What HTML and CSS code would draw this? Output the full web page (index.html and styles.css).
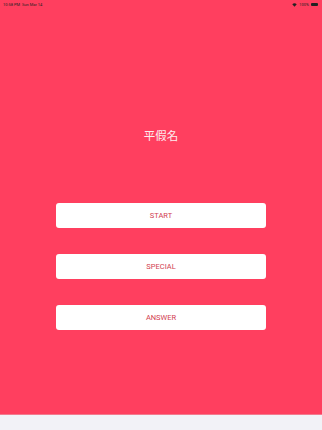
FILE: index.html
```html
<!DOCTYPE html>
<html lang="ja">
<head>
  <meta charset="UTF-8">
  <meta name="viewport" content="width=device-width, initial-scale=1.0">
  <title>平假名</title>
  <link rel="stylesheet" href="styles.css">
</head>
<body>
  <div class="screen">
    <div class="status-bar">
      <span class="status-time">10:58 PM&nbsp;&nbsp;Sun Mar 14</span>
      <span class="status-right">
        <svg class="wifi" viewBox="0 0 10 8" width="5" height="4">
          <path d="M5 7.5 L0.5 2.5 A6.5 6.5 0 0 1 9.5 2.5 Z" fill="#222"/>
        </svg>
        <span>100%</span>
        <span class="battery"></span>
      </span>
    </div>

    <div class="main">
      <h1 class="title">平假名</h1>
      <div class="menu">
        <button class="menu-btn">START</button>
        <button class="menu-btn">SPECIAL</button>
        <button class="menu-btn">ANSWER</button>
      </div>
    </div>

    <div class="bottom-bar"></div>
  </div>
</body>
</html>
```

FILE: styles.css
```css
html, body {
  margin: 0;
  padding: 0;
}
body {
  font-family: Roboto, "Noto Sans CJK JP", sans-serif;
  background-color: #F2F2F7;
}
.screen {
  width: 322px;
  height: 430px;
  display: flex;
  flex-direction: column;
  overflow: hidden;
}
.status-bar {
  height: 9px;
  padding: 0 4px 0 3px;
  display: flex;
  align-items: center;
  justify-content: space-between;
  font-size: 4px;
  color: #222;
  background-color: #FF3F5F;
}
.status-right {
  display: flex;
  align-items: center;
  gap: 2px;
}
.battery {
  width: 7px;
  height: 3px;
  border-radius: 1px;
  background-color: #222;
  display: inline-block;
}
.main {
  flex: 1;
  background-color: #FF3F5F;
  display: flex;
  flex-direction: column;
  align-items: center;
  border-bottom: 1px solid #F27A8E;
}
.title {
  margin: 119px 0 0;
  font-size: 11.5px;
  font-weight: normal;
  color: #FDECEF;
  line-height: 16px;
}
.menu {
  margin-top: 59px;
  display: flex;
  flex-direction: column;
  gap: 26px;
}
.menu-btn {
  width: 210px;
  height: 25px;
  border: none;
  border-radius: 3px;
  background-color: #FFFFFF;
  color: #D2404F;
  font-family: Roboto, sans-serif;
  font-size: 7.5px;
  font-weight: normal;
  padding: 0;
  cursor: pointer;
}
.bottom-bar {
  height: 15px;
  background-color: #F2F2F7;
}
```
